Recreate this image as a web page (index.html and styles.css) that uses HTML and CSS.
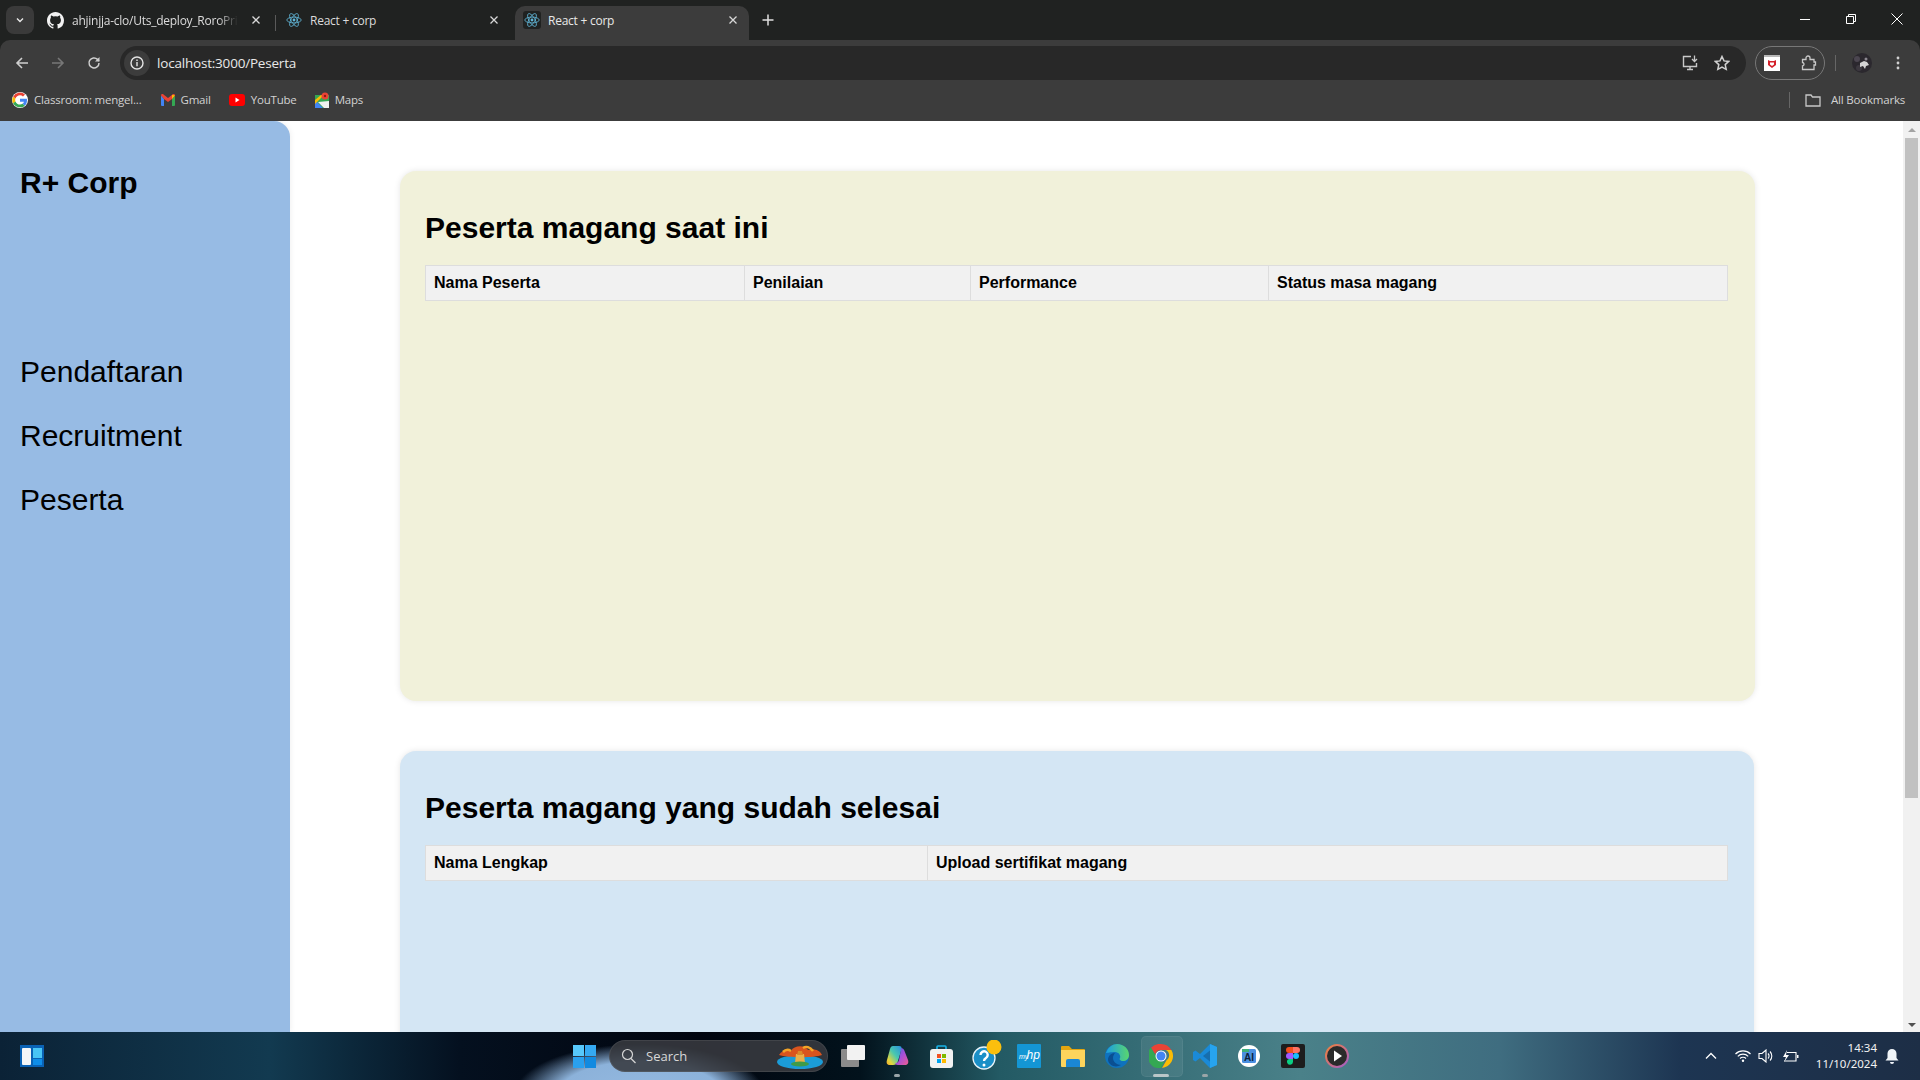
FILE: index.html
```html
<!DOCTYPE html>
<html lang="en">
<head>
<meta charset="utf-8">
<title>React + corp</title>
<link rel="stylesheet" href="styles.css">
</head>
<body>
<svg class="defs" width="0" height="0" aria-hidden="true">
  <symbol id="react" viewBox="0 0 16 16">
    <g fill="none" stroke="#61b6d8" stroke-width=".8">
      <ellipse cx="8" cy="8" rx="7.2" ry="2.9"/>
      <ellipse cx="8" cy="8" rx="7.2" ry="2.9" transform="rotate(60 8 8)"/>
      <ellipse cx="8" cy="8" rx="7.2" ry="2.9" transform="rotate(120 8 8)"/>
    </g>
    <circle cx="8" cy="8" r="1.4" fill="#61b6d8"/>
  </symbol>
  <symbol id="close" viewBox="0 0 10 10">
    <path d="M1.5 1.5l7 7M8.5 1.5l-7 7" stroke="#d8d8d8" stroke-width="1.3" fill="none"/>
  </symbol>
</svg>

<div class="window">
  <header class="tabstrip">
    <button class="tabsearch"><svg width="10" height="10" viewBox="0 0 10 10"><path d="M2 3.5l3 3 3-3" stroke="#e8e8e8" stroke-width="1.4" fill="none"/></svg></button>
    <div class="tab tab-first">
      <svg class="favicon" width="17" height="17" viewBox="0 0 16 16"><path fill="#f2f2f2" d="M8 0C3.58 0 0 3.58 0 8c0 3.54 2.29 6.53 5.47 7.59.4.07.55-.17.55-.38v-1.34c-2.23.48-2.7-1.07-2.7-1.07-.36-.92-.89-1.17-.89-1.17-.73-.5.05-.49.05-.49.8.06 1.23.83 1.23.83.71 1.23 1.87.87 2.33.66.07-.52.28-.87.51-1.07-1.78-.2-3.64-.89-3.64-3.95 0-.87.31-1.59.82-2.15-.08-.2-.36-1.02.08-2.12 0 0 .67-.21 2.2.82a7.6 7.6 0 0 1 4 0c1.53-1.04 2.2-.82 2.2-.82.44 1.1.16 1.92.08 2.12.51.56.82 1.27.82 2.15 0 3.07-1.87 3.75-3.65 3.95.29.25.54.73.54 1.48v2.2c0 .21.15.46.55.38A8.01 8.01 0 0 0 16 8c0-4.42-3.58-8-8-8z"/></svg>
      <span class="tab-title tab-title-clip">ahjinjja-clo/Uts_deploy_RoroPrima</span>
      <svg class="tab-x" width="10" height="10"><use href="#close"/></svg>
    </div>
    <span class="tab-sep"></span>
    <div class="tab tab-second">
      <svg class="favicon" width="16" height="16"><use href="#react"/></svg>
      <span class="tab-title">React + corp</span>
      <svg class="tab-x" width="10" height="10"><use href="#close"/></svg>
    </div>
    <div class="tab tab-active">
      <span class="favicon-box"><svg width="16" height="16"><use href="#react"/></svg></span>
      <span class="tab-title">React + corp</span>
      <svg class="tab-x" width="10" height="10"><use href="#close"/></svg>
    </div>
    <svg class="newtab" width="12" height="12" viewBox="0 0 12 12"><path d="M6 .5v11M.5 6h11" stroke="#e0e0e0" stroke-width="1.5"/></svg>
    <div class="winctl">
      <svg width="12" height="12" viewBox="0 0 12 12"><path d="M1 6.5h10" stroke="#fff" stroke-width="1"/></svg>
      <svg width="12" height="12" viewBox="0 0 12 12"><path d="M1.5 3.5h7v7h-7zM3.5 3V1.5h7v7H9" fill="none" stroke="#fff" stroke-width="1"/></svg>
      <svg width="14" height="14" viewBox="0 0 14 14"><path d="M1.5 1.5l11 11M12.5 1.5l-11 11" stroke="#fff" stroke-width="1"/></svg>
    </div>
  </header>

  <div class="toolbar">
    <span class="navbtn"><svg width="14" height="14" viewBox="0 0 14 14"><path d="M13 7H2M7 2L2 7l5 5" fill="none" stroke="#cfcfcf" stroke-width="1.6"/></svg></span>
    <span class="navbtn"><svg width="14" height="14" viewBox="0 0 14 14"><path d="M1 7h11M7 2l5 5-5 5" fill="none" stroke="#777" stroke-width="1.6"/></svg></span>
    <span class="navbtn"><svg width="14" height="14" viewBox="0 0 14 14"><path d="M12 7a5 5 0 1 1-1.5-3.6L12 5" fill="none" stroke="#cfcfcf" stroke-width="1.5"/><path d="M12.5 1v4.5H8z" fill="#cfcfcf"/></svg></span>
    <div class="omnibox">
      <span class="siteinfo"><svg width="14" height="14" viewBox="0 0 14 14"><circle cx="7" cy="7" r="6" fill="none" stroke="#e4e4e4" stroke-width="1.4"/><path d="M7 6v4.2M7 3.6v1.4" stroke="#e4e4e4" stroke-width="1.4"/></svg></span>
      <span class="url">localhost:3000/Peserta</span>
      <svg class="omni-install" width="17" height="16" viewBox="0 0 17 16"><path d="M9 1.5H1.5v10h13V8M5 14.5h6M8 11.500v3" fill="none" stroke="#c8c8c8" stroke-width="1.4"/><path d="M12.500 .5v5.500M10 4l2.500 2.500L15 4" fill="none" stroke="#c8c8c8" stroke-width="1.3"/></svg>
      <svg class="omni-star" width="16" height="16" viewBox="0 0 16 16"><path d="M8 1.500l2 4.400 4.700.5-3.500 3.200 1 4.700L8 12l-4.200 2.300 1-4.700L1.300 6.400 6 5.900z" fill="none" stroke="#d0d0d0" stroke-width="1.500"/></svg>
    </div>
    <div class="extpill">
      <svg width="16" height="16" viewBox="0 0 16 16"><rect width="16" height="16" fill="#fff"/><rect width="16" height="2" fill="#b8b8b8"/><path d="M4 5l2 1h4l2-1v5l-4 3-4-3z" fill="#d4212a"/><path d="M6 7.500h4v2L8 11 6 9.500z" fill="#fff"/></svg>
      <svg width="16" height="16" viewBox="0 0 16 16"><path d="M1.500 4.500h3.500V3a2 2 0 0 1 4 0v1.500h4V7h1.500v3H13v4.500H1.500V11C3.500 11 3.500 7.500 1.500 7.500z" fill="none" stroke="#c8c8c8" stroke-width="1.300"/></svg>
    </div>
    <span class="toolsep"></span>
    <svg class="avatar" width="20" height="20" viewBox="0 0 20 20"><circle cx="10" cy="10" r="10" fill="#2b282e"/><circle cx="5" cy="6" r="3" fill="#4b4650"/><circle cx="7" cy="15" r="3" fill="#3d3940"/><path d="M8 10l4-2 3 1 2 3-3 1-1 3-2-3-3 1z" fill="#d4d4d4"/><circle cx="14" cy="6" r="1.500" fill="#8c8890"/></svg>
    <svg class="dots" width="4" height="14" viewBox="0 0 4 14"><circle cx="2" cy="2" r="1.400" fill="#d0d0d0"/><circle cx="2" cy="7" r="1.400" fill="#d0d0d0"/><circle cx="2" cy="12" r="1.400" fill="#d0d0d0"/></svg>
  </div>

  <nav class="bookmarks">
    <span class="bm bm-1"><svg width="16" height="16" viewBox="0 0 48 48"><circle cx="24" cy="24" r="24" fill="#fff"/><path fill="#ea4335" d="M24 10c3.500 0 6.500 1.200 9 3.400l6-6A23 23 0 0 0 3.400 14l7 5.400C12.300 14 17.700 10 24 10z"/><path fill="#4285f4" d="M45 24.500c0-1.500-.1-3-.4-4.500H24v9h11.800a10 10 0 0 1-4.400 6.600l6.800 5.300c4-3.700 6.800-9.200 6.800-16.400z"/><path fill="#fbbc05" d="M10.400 28.600a14 14 0 0 1 0-9.200l-7-5.400a23 23 0 0 0 0 20.600z"/><path fill="#34a853" d="M24 46c6 0 11-2 14.200-5.100l-6.800-5.300c-1.900 1.300-4.300 2.100-7.400 2.100-6.300 0-11.700-4-13.600-9.400l-7 5.400A23 23 0 0 0 24 46z"/></svg><span>Classroom: mengel...</span></span>
    <span class="bm bm-2"><svg width="14" height="12" viewBox="0 0 14 12"><path fill="#4285f4" d="M0 1.500V11a1 1 0 0 0 1 1h2V5z"/><path fill="#34a853" d="M14 1.500V11a1 1 0 0 1-1 1h-2V5z"/><path fill="#ea4335" d="M0 1.500C0 0 1.500-.4 2.500.4L7 4l4.500-3.600C12.500-.4 14 0 14 1.500L11 5 7 8 3 5z"/><path fill="#fbbc05" d="M11 .8l3 .7L11 5z"/></svg><span>Gmail</span></span>
    <span class="bm bm-3"><svg width="16" height="12" viewBox="0 0 16 12"><rect width="16" height="12" rx="3" fill="#f00"/><path d="M6.500 3.500v5l4-2.500z" fill="#fff"/></svg><span>YouTube</span></span>
    <span class="bm bm-4"><svg width="14" height="16" viewBox="0 0 14 16"><path fill="#34a853" d="M0 3h14v13H0z"/><path fill="#4285f4" d="M0 16V8l8 8z"/><path fill="#fbbc05" d="M0 8l6-5h3L0 12z"/><path fill="#f1f1f1" d="M14 9v7H9L3 10z"/><circle cx="10" cy="4" r="3.500" fill="#ea4335"/><circle cx="10" cy="4" r="1.200" fill="#8b1a12"/></svg><span>Maps</span></span>
    <span class="bm-sep"></span>
    <span class="bm bm-all"><svg width="16" height="14" viewBox="0 0 16 14"><path d="M1 2h5l1.500 2H15v9H1z" fill="none" stroke="#c8c8c8" stroke-width="1.300"/></svg><span>All Bookmarks</span></span>
  </nav>

  <div class="app">
    <aside class="sidebar">
      <h1 class="brand">R+ Corp</h1>
      <ul class="menu">
        <li>Pendaftaran</li>
        <li>Recruitment</li>
        <li>Peserta</li>
      </ul>
    </aside>
    <main class="content">
      <section class="card card-yellow">
        <h2>Peserta magang saat ini</h2>
        <table>
          <thead><tr>
            <th class="c-nama">Nama Peserta</th>
            <th class="c-nilai">Penilaian</th>
            <th class="c-perf">Performance</th>
            <th>Status masa magang</th>
          </tr></thead>
        </table>
      </section>
      <section class="card card-blue">
        <h2>Peserta magang yang sudah selesai</h2>
        <table>
          <thead><tr>
            <th class="c-lengkap">Nama Lengkap</th>
            <th>Upload sertifikat magang</th>
          </tr></thead>
        </table>
      </section>
    </main>
    <div class="scrollbar">
      <span class="arrow-up"></span>
      <span class="thumb"></span>
      <span class="arrow-down"></span>
    </div>
  </div>

  <footer class="taskbar">
    <svg class="widget" width="24" height="22" viewBox="0 0 24 22"><rect width="24" height="22" fill="#0a62b5"/><rect x="2" y="3" width="9" height="17" rx="1" fill="#f4f6f8"/><rect x="13" y="3" width="9" height="10" fill="#49c5f5"/><rect x="13" y="14" width="9" height="6" fill="#0f8de8"/></svg>
    <svg class="start" width="23" height="23" viewBox="0 0 23 23"><rect width="11" height="11" fill="#57c8fb"/><rect x="12" width="11" height="11" fill="#35a9f2"/><rect y="12" width="11" height="11" fill="#2aa0ee"/><rect x="12" y="12" width="11" height="11" fill="#128ae0"/></svg>
    <div class="search">
      <svg width="16" height="16" viewBox="0 0 16 16"><circle cx="6.500" cy="6.500" r="5" fill="none" stroke="#d6d6d6" stroke-width="1.200"/><path d="M10 10.500l4.500 4.500" stroke="#d6d6d6" stroke-width="1.300"/></svg>
      <span>Search</span>
      <svg class="search-art" width="48" height="26" viewBox="0 0 48 26"><ellipse cx="24" cy="19" rx="23" ry="7" fill="#1b9cd8"/><path d="M3 12C6 7 12 6 15 8c3-6 14-6 17-1 5-2 12 0 14 5-8 3-34 3-43 0z" fill="#d9541e"/><path d="M7 9c2-2 5-3 8-1M27 5c3-2 7-1 10 3" stroke="#f4a428" stroke-width="2.500" fill="none"/><path d="M19 20l1-9h8l1 9z" fill="#e9b04a"/><path d="M22 8h4l1 4h-6z" fill="#d98a2b"/><ellipse cx="24" cy="21" rx="9" ry="2.500" fill="#3e9b4a"/></svg>
    </div>
    <div class="apps">
      <span class="app-cell"><svg width="24" height="22" viewBox="0 0 24 22"><rect y="4" width="18" height="18" rx="1" fill="#8b8b8b"/><rect x="6" y="0" width="18" height="15" rx="1" fill="#f2f2f2"/></svg></span>
      <span class="app-cell app-dot"><svg width="23" height="22" viewBox="0 0 23 22"><defs><linearGradient id="cp1" x1="1" y1="0" x2="0" y2="1"><stop offset="0" stop-color="#2a8fe0"/><stop offset=".45" stop-color="#48c8b0"/><stop offset=".8" stop-color="#e4d63c"/><stop offset="1" stop-color="#f5a42a"/></linearGradient><linearGradient id="cp2" x1="0" y1="0" x2="1" y2="1"><stop offset="0" stop-color="#3a6fe0"/><stop offset=".5" stop-color="#a84fd8"/><stop offset="1" stop-color="#ee5d8f"/></linearGradient></defs><path d="M7 1h6c2 0 3 1 2.500 3L12 16c-1 3-2.500 4-5 4H4c-3 0-4-2-3-5L4 4c.5-2 1.500-3 3-3z" fill="url(#cp1)"/><path d="M15 3c1.500 0 3 1 3.500 3l3.500 9c1 3-.5 5-3 5h-7c-2 0-3-1-2.500-2 2 0 3-1 3.500-3l1.500-8c.2-2 .2-3 .5-4z" fill="url(#cp2)"/></svg></span>
      <span class="app-cell"><svg width="23" height="24" viewBox="0 0 23 24"><path d="M7 6V3a1 1 0 0 1 1-1h7a1 1 0 0 1 1 1v3" fill="none" stroke="#19b4e8" stroke-width="1.600"/><rect y="5" width="23" height="19" rx="3" fill="#f2f2f2"/><rect x="7" y="10" width="4" height="4" fill="#f25022"/><rect x="12" y="10" width="4" height="4" fill="#7fba00"/><rect x="7" y="15" width="4" height="4" fill="#00a4ef"/><rect x="12" y="15" width="4" height="4" fill="#ffb900"/></svg></span>
      <span class="app-cell app-help"><svg width="30" height="30" viewBox="0 0 30 30"><circle cx="12" cy="18" r="11" fill="#1a8fc7" stroke="#e8f4fa" stroke-width="1.300"/><path d="M8.500 15a3.600 3.600 0 1 1 5.500 3c-1.500 1-2 1.500-2 3" fill="none" stroke="#fff" stroke-width="2.400"/><circle cx="12" cy="25" r="1.500" fill="#fff"/><circle cx="22" cy="7" r="7.500" fill="#fbbf0d"/></svg></span>
      <span class="app-cell"><svg width="24" height="24" viewBox="0 0 24 24"><rect width="24" height="24" rx="1" fill="#1496d4"/><text x="2" y="15" class="hp-text">my</text><text x="9.500" y="15" class="hp-text hp-bold">hp</text></svg></span>
      <span class="app-cell"><svg width="24" height="22" viewBox="0 0 24 22"><path d="M0 2a1 1 0 0 1 1-1h7l3 3h12a1 1 0 0 1 1 1v2H0z" fill="#e3a50f"/><path d="M0 5h24v16a1 1 0 0 1-1 1H1a1 1 0 0 1-1-1z" fill="#fdd45c"/><path d="M5 16a2 2 0 0 1 2-2h10a2 2 0 0 1 2 2v6H5z" fill="#1a87d5"/></svg></span>
      <span class="app-cell"><svg width="24" height="24" viewBox="0 0 24 24"><defs><linearGradient id="ed1" x1="0" y1="0" x2="1" y2="0"><stop offset="0" stop-color="#1b9de2"/><stop offset="1" stop-color="#5ad66d"/></linearGradient></defs><circle cx="12" cy="12" r="12" fill="#0f72bd"/><path d="M1 9C3 3 8 0 12 0c7 0 12 5 12 11 0 4-3 6-6 6-3 0-4-2-3-3 1-2-1-6-5-6-4 0-8 1-9 1z" fill="url(#ed1)"/><path d="M8 14c0 4 4 7 8 7-5 3-12 1-13-5 0-4 3-7 7-7-1 1-2 3-2 5z" fill="#0a4f92"/></svg></span>
      <span class="app-cell app-active"><svg width="24" height="24" viewBox="0 0 48 48"><path d="M24 0a24 24 0 0 1 20.800 12H24a12 12 0 0 0-11.500 8.500L4 7.500A24 24 0 0 1 24 0z" fill="#ea4335"/><path d="M44.800 12a24 24 0 0 1-18.800 36l9-15.500a12 12 0 0 0-1-20.500z" fill="#fbbc05"/><path d="M4 7.500l11 19a12 12 0 0 0 16 8.500L24 48A24 24 0 0 1 4 7.500z" fill="#34a853"/><circle cx="24" cy="24" r="11" fill="#fff"/><circle cx="24" cy="24" r="9" fill="#4285f4"/></svg></span>
      <span class="app-cell app-dot"><svg width="24" height="24" viewBox="0 0 24 24"><path d="M17 0l7 3v18l-7 3-10-10-4.500 3.500L0 16V8l2.500-1.500L7 10z" fill="#1a8ad8"/><path d="M17 0l7 3v18l-7 3z" fill="#27a4ee"/><path d="M17 6.500L10 12l7 5.500z" fill="#0f1c2c" opacity=".25"/></svg></span>
      <span class="app-cell"><svg width="22" height="22" viewBox="0 0 22 22"><circle cx="11" cy="11" r="11" fill="#fff"/><rect x="4" y="4" width="14" height="14" rx="1.500" fill="#4a8fe0"/><rect x="4" y="4" width="7" height="3" fill="#3fae7a"/><text x="6" y="16" class="ai-text">AI</text></svg></span>
      <span class="app-cell"><svg width="24" height="24" viewBox="0 0 24 24"><rect width="24" height="24" rx="2" fill="#1d1d1d"/><path d="M8 3h4v6H8a3 3 0 0 1 0-6z" fill="#f24e1e"/><path d="M12 3h4a3 3 0 0 1 0 6h-4z" fill="#ff7262"/><path d="M8 9h4v6H8a3 3 0 0 1 0-6z" fill="#a259ff"/><circle cx="15" cy="12" r="3" fill="#1abcfe"/><path d="M8 15h4v3a3 3 0 1 1-4-3z" fill="#0acf83"/></svg></span>
      <span class="app-cell"><svg width="24" height="24" viewBox="0 0 24 24"><defs><linearGradient id="pl" x1="0" y1="0" x2="1" y2="1"><stop offset="0" stop-color="#f0813a"/><stop offset="1" stop-color="#a35cc8"/></linearGradient></defs><circle cx="12" cy="12" r="11" fill="#2a2a2a" stroke="url(#pl)" stroke-width="2"/><path d="M9 6.500v11l8-5.500z" fill="#fff"/></svg></span>
    </div>
    <div class="tray">
      <svg class="t-chev" width="12" height="8" viewBox="0 0 12 8"><path d="M1 6.500l5-5 5 5" fill="none" stroke="#fff" stroke-width="1.300"/></svg>
      <svg class="t-wifi" width="16" height="12" viewBox="0 0 16 12"><path d="M.5 4a10.500 10.500 0 0 1 15 0M2.800 6.300a7.300 7.300 0 0 1 10.400 0M5 8.500a4.200 4.200 0 0 1 6 0" fill="none" stroke="#fff" stroke-width="1.200"/><circle cx="8" cy="10.700" r="1.200" fill="#fff"/></svg>
      <svg class="t-vol" width="16" height="14" viewBox="0 0 16 14"><path d="M1 4.500h3L8 1v12L4 9.500H1z" fill="none" stroke="#fff" stroke-width="1.100"/><path d="M10 4.500a3.500 3.500 0 0 1 0 5M12 2.500a6.500 6.500 0 0 1 0 9" fill="none" stroke="#fff" stroke-width="1.100"/></svg>
      <svg class="t-bat" width="17" height="13" viewBox="0 0 17 13"><path d="M5 2.500h9v8.500H2" fill="none" stroke="#fff" stroke-width="1.100"/><rect x="15" y="5" width="1.500" height="3" fill="#fff"/><path d="M5 0L1 7h3l-2 5 5-7H4z" fill="#fff"/></svg>
      <div class="clock"><span>14:34</span><span>11/10/2024</span></div>
      <svg class="t-bell" width="14" height="16" viewBox="0 0 14 16"><path d="M7 1a4.500 4.500 0 0 0-4.500 4.500V10L.5 12.500h13L11.500 10V5.500A4.500 4.500 0 0 0 7 1z" fill="#f0f4f8"/><path d="M5 14a2 2 0 0 0 4 0z" fill="#f0f4f8"/></svg>
    </div>
  </footer>
</div>
</body>
</html>
```

FILE: styles.css
```css
* { box-sizing: border-box; }
html, body { margin: 0; padding: 0; height: 100%; overflow: hidden; }
body { font-family: "Liberation Sans", Arial, sans-serif; color: #000; background: #fff; }
.defs { display: block; height: 0; }
.window { display: flex; flex-direction: column; width: 1920px; height: 1080px; overflow: hidden; background: #202221; }

/* tab strip */
.tabstrip { display: flex; align-items: flex-end; height: 40px; flex: none; background: #202221; padding-left: 6px; }
.tabsearch { width: 28px; height: 28px; margin-bottom: 6px; border: 0; padding: 0; border-radius: 8px; background: #3a3a3a; display: flex; align-items: center; justify-content: center; }
.tab { display: flex; align-items: center; height: 34px; padding-bottom: 6px; font-family: "Open Sans", "Noto Sans", sans-serif; font-size: 12px; letter-spacing: -.25px; color: #dcdcdc; }
.tab-first { width: 241px; padding-left: 13px; }
.tab-second { width: 239px; padding-left: 10px; }
.tab-active { width: 234px; padding-left: 8px; background: #3c3c3c; border-radius: 10px 10px 0 0; color: #e8e8e8; }
.tab-title { flex: none; white-space: nowrap; }
.favicon { flex: none; margin-right: 8px; }
.favicon-box { width: 18px; height: 18px; display: flex; align-items: center; justify-content: center; background: #202221; border-radius: 3px; margin-right: 7px; flex: none; }
.tab-title-clip { width: 166px; overflow: hidden; -webkit-mask-image: linear-gradient(90deg, #000 88%, transparent 100%); mask-image: linear-gradient(90deg, #000 88%, transparent 100%); }
.tab-x { flex: none; margin-left: auto; margin-right: 11px; }
.tab-first .tab-x { margin-right: 14px; }
.tab-second .tab-x { margin-right: 16px; }
.tab-sep { width: 1px; height: 16px; margin-bottom: 9px; background: #5a5a5a; flex: none; }
.newtab { margin: 0 0 14px 13px; flex: none; }
.winctl { display: flex; align-items: center; margin-left: auto; margin-bottom: 14px; gap: 33.5px; padding-right: 16px; }

/* toolbar */
.toolbar { display: flex; align-items: center; height: 41px; flex: none; background: #3c3c3c; border-radius: 10px 10px 0 0; padding: 5px 0 0 4px; }
.navbtn { width: 36px; display: flex; justify-content: center; flex: none; }
.omnibox { display: flex; align-items: center; width: 1626px; height: 34px; margin-left: 8px; background: #282828; border-radius: 17px; padding-left: 4px; }
.siteinfo { width: 26px; height: 26px; border-radius: 50%; background: #3c3c3c; display: flex; align-items: center; justify-content: center; flex: none; }
.url { margin-left: 7px; font-family: "Open Sans", "Noto Sans", sans-serif; font-size: 13.5px; letter-spacing: -.2px; color: #e8e8e8; }
.omni-install { margin-left: auto; }
.omni-star { margin-left: 15px; margin-right: 16px; }
.extpill { display: flex; align-items: center; width: 70px; height: 34px; margin-left: 9px; border: 1px solid #777; border-radius: 17px; padding: 0 7px 0 8px; justify-content: space-between; flex: none; }
.toolsep { width: 1px; height: 16px; margin-left: 10px; background: #666; flex: none; }
.avatar { margin-left: 16px; flex: none; }
.dots { margin-left: 24px; flex: none; }

/* bookmarks */
.bookmarks { display: flex; align-items: center; height: 40px; flex: none; background: #3c3c3c; padding: 0 0 3px 12px; font-family: "Open Sans", "Noto Sans", sans-serif; font-size: 11.5px; letter-spacing: -.2px; color: #d2d2d2; }
.bm { display: flex; align-items: center; gap: 6px; flex: none; }
.bm-2 { margin-left: 19px; }
.bm-3 { margin-left: 18px; }
.bm-4 { margin-left: 18px; }
.bm-sep { width: 1px; height: 16px; background: #666; margin-left: auto; flex: none; }
.bm-all { margin-left: 15px; margin-right: 15px; gap: 10px; }

/* page */
.app { display: flex; flex: 1; min-height: 0; background: #fff; overflow: hidden; }
.sidebar { width: 290px; flex: none; background: #97bbe4; border-top-right-radius: 16px; padding: 45px 20px 0; box-shadow: 0 0 6px rgba(0,0,0,.08); }
.brand { margin: 0; font-size: 30px; font-weight: 700; line-height: 34px; }
.menu { list-style: none; margin: 155px 0 0; padding: 0; display: flex; flex-direction: column; gap: 30px; font-size: 30px; line-height: 34px; }
.content { flex: 1; min-width: 0; padding: 50px 148px 0 110px; display: flex; flex-direction: column; gap: 50px; }
.card { flex: none; border-radius: 16px; padding: 38px 27px 25px 25px; box-shadow: 0 0 6px rgba(0,0,0,.1); }
.card-yellow { height: 530px; background: #f1f1da; }
.card-blue { height: 530px; margin-right: 1px; padding-right: 26px; background: #d4e6f4; }
h2 { margin: 0 0 19px; font-size: 30px; font-weight: 700; line-height: 37px; }
table { width: 100%; border-collapse: collapse; table-layout: fixed; }
th { padding: 8px; text-align: left; font-size: 16px; font-weight: 700; line-height: 18px; background: #f1f1f1; border: 1px solid #ddd; }
.c-nama { width: 319px; }
.c-nilai { width: 226px; }
.c-perf { width: 298px; }
.c-lengkap { width: 502px; }

/* scrollbar */
.scrollbar { width: 17px; flex: none; background: #f1f1f1; display: flex; flex-direction: column; align-items: center; }
.arrow-up { width: 0; height: 0; margin-top: 7px; border: 4px solid transparent; border-top: 0; border-bottom: 4px solid #a3a3a3; }
.thumb { width: 13px; height: 660px; margin-top: 6px; background: #c1c1c1; }
.arrow-down { width: 0; height: 0; margin-top: auto; margin-bottom: 5px; border: 4px solid transparent; border-bottom: 0; border-top: 4px solid #505050; }

/* taskbar */
.taskbar { display: flex; align-items: center; height: 48px; flex: none; color: #fff; padding-left: 20px;
  background:
    radial-gradient(ellipse 125px 50px at 640px 62px, #95b9e0 0, #8cb2da 65%, rgba(140,178,218,0) 100%),
    linear-gradient(90deg, #0b2236 0, #123a50 270px, #04101f 460px, #01050f 700px, #02121c 860px, #235a64 1000px, #4a8189 1300px, #3f6d80 1500px, #1d3552 1680px, #1d2e46 1920px);
}
.widget { flex: none; }
.start { flex: none; margin-left: 529px; }
.search { display: flex; align-items: center; width: 219px; height: 32px; margin-left: 13px; flex: none; background: rgba(56,58,64,.88); border: 1px solid rgba(255,255,255,.08); border-radius: 16px; padding: 0 3px 0 11px; font-family: "Open Sans", "Noto Sans", sans-serif; font-size: 13px; color: #d8d8d8; }
.search span { margin-left: 9px; }
.search-art { margin-left: auto; }
.apps { display: flex; align-items: center; margin-left: 3px; flex: none; height: 48px; }
.app-cell { width: 44px; height: 48px; display: flex; align-items: center; justify-content: center; position: relative; }
.app-dot::after { content: ""; position: absolute; left: 19px; bottom: 3px; width: 6px; height: 3px; border-radius: 2px; background: #9aa5a8; }
.app-active::before { content: ""; position: absolute; left: 2px; top: 4px; width: 40px; height: 39px; border-radius: 5px; background: rgba(255,255,255,.07); border: 1px solid rgba(255,255,255,.06); }
.app-active::after { content: ""; position: absolute; left: 14px; bottom: 3px; width: 16px; height: 3px; border-radius: 2px; background: #b9c6c8; }
.app-active svg { position: relative; }
.app-help svg { margin-top: -3px; margin-left: 4px; }
.hp-text { font: italic 7px "Liberation Sans", sans-serif; fill: #fff; }
.hp-bold { font-size: 12px; }
.ai-text { font: 700 10px "Liberation Sans", sans-serif; fill: #0d1f3a; }
.tray { display: flex; align-items: center; margin-left: auto; flex: none; }
.t-wifi { margin-left: 18px; }
.t-vol { margin-left: 7px; }
.t-bat { margin-left: 8px; }
.clock { display: flex; flex-direction: column; align-items: flex-end; margin-left: 17px; font-family: "Noto Sans", "Open Sans", sans-serif; font-size: 11.5px; line-height: 16px; color: #f2f2f2; }
.t-bell { margin-left: 8px; margin-right: 21px; }
```
